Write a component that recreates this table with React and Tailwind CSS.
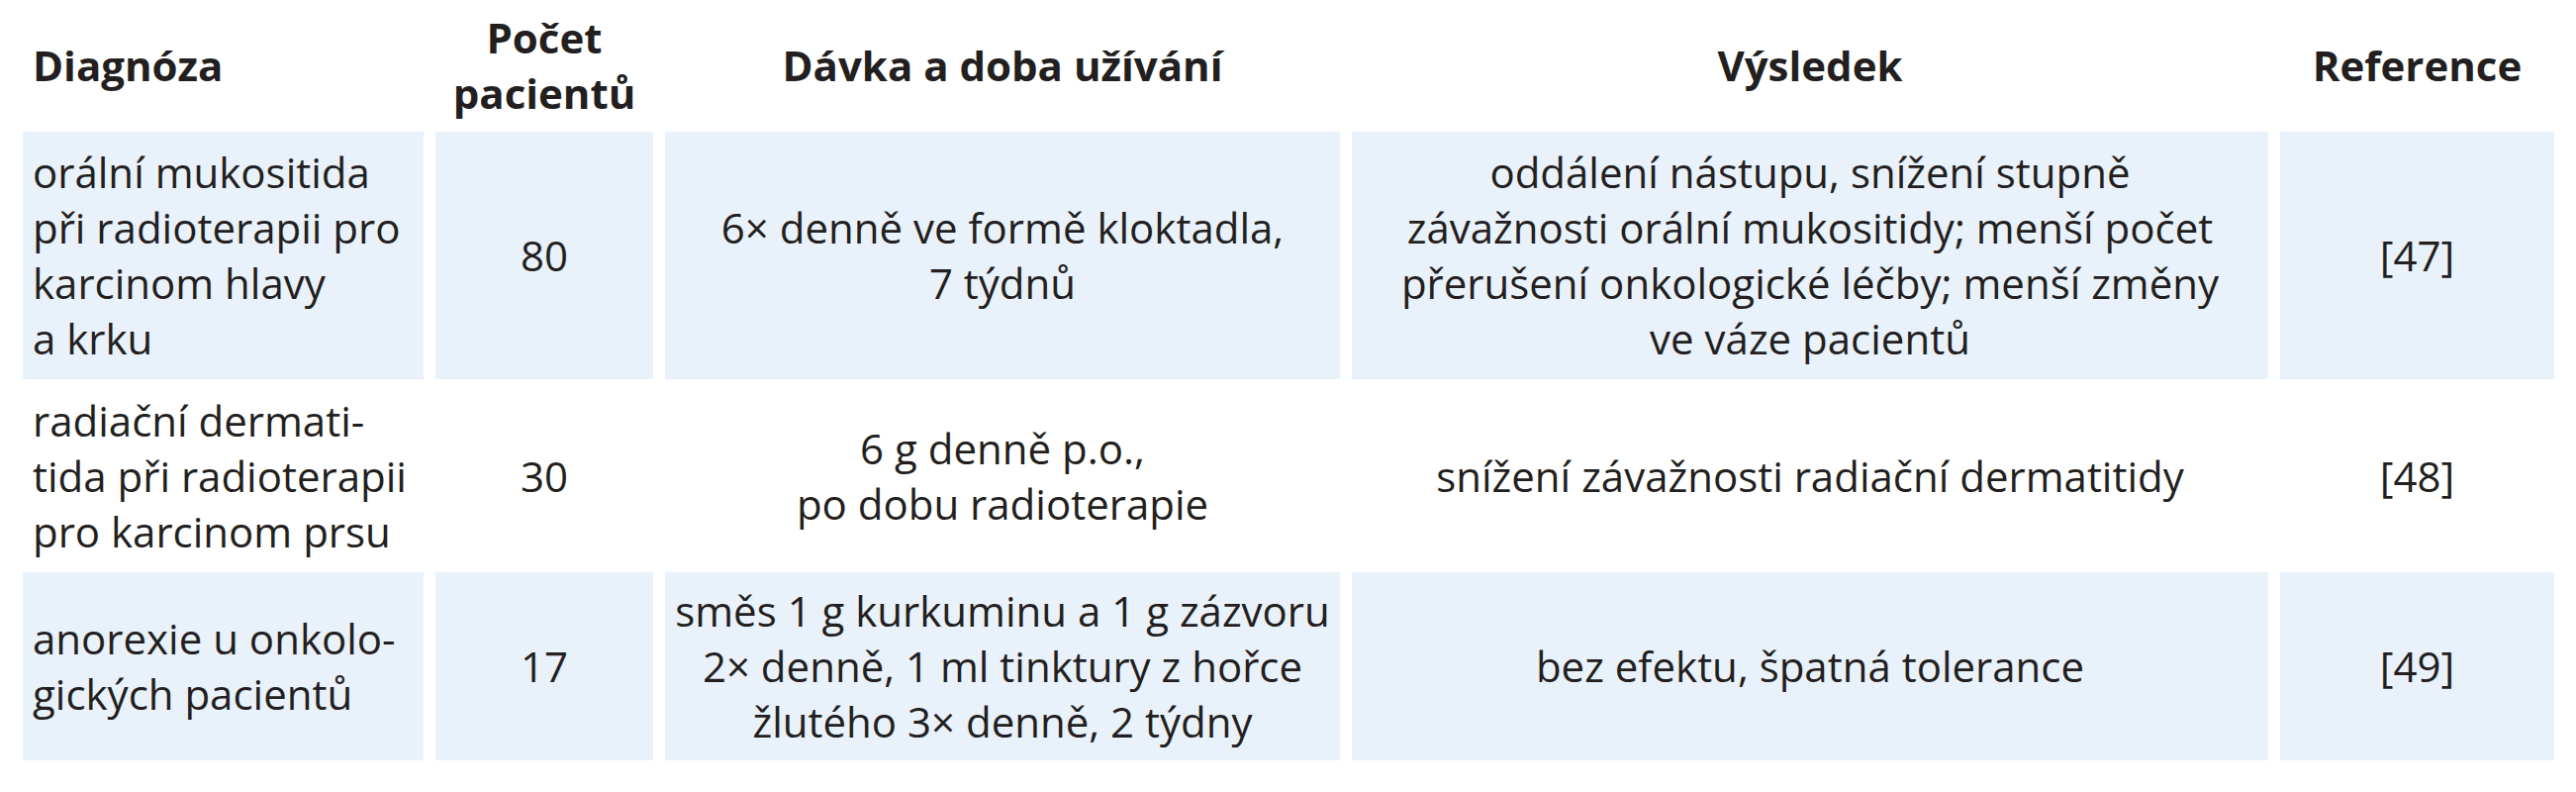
import React from "react";

const font = { fontFamily: '"Open Sans", "Noto Sans", sans-serif' };

function Cell({ children, shaded, left, className = "" }) {
  return (
    <div
      className={
        "flex items-center " +
        (left ? "justify-start text-left px-[10px] " : "justify-center text-center px-[4px] ") +
        (shaded ? "bg-[#e9f1fa] " : "bg-white ") +
        className
      }
    >
      <div className="whitespace-nowrap">{children}</div>
    </div>
  );
}

const L = ({ lines }) =>
  lines.map((l, i) => (
    <React.Fragment key={i}>
      {l}
      {i < lines.length - 1 && <br />}
    </React.Fragment>
  ));

const rowClass =
  "grid grid-cols-[405px_220px_682px_926px_277px] gap-x-[12px]";

export default function App() {
  return (
    <div
      className="w-[2603px] h-[800px] bg-white text-[#231f20] text-[42px] leading-[56px]"
      style={font}
    >
      <div className="pl-[23px] flex flex-col gap-y-[2px] w-[2581px]">
        <div className={rowClass + " h-[131px] font-bold"}>
          <Cell left>Diagnóza</Cell>
          <Cell>
            <L lines={["Počet", "pacientů"]} />
          </Cell>
          <Cell>Dávka a doba užívání</Cell>
          <Cell>Výsledek</Cell>
          <Cell>Reference</Cell>
        </div>

        <div className={rowClass + " h-[250px]"}>
          <Cell shaded left>
            <L
              lines={[
                "orální mukositida",
                "při radioterapii pro",
                "karcinom hlavy",
                "a krku",
              ]}
            />
          </Cell>
          <Cell shaded>80</Cell>
          <Cell shaded>
            <L lines={["6× denně ve formě kloktadla,", "7 týdnů"]} />
          </Cell>
          <Cell shaded>
            <L
              lines={[
                "oddálení nástupu, snížení stupně",
                "závažnosti orální mukositidy; menší počet",
                "přerušení onkologické léčby; menší změny",
                "ve váze pacientů",
              ]}
            />
          </Cell>
          <Cell shaded>[47]</Cell>
        </div>

        <div className={rowClass + " h-[191px]"}>
          <Cell left>
            <L
              lines={[
                "radiační dermati-",
                "tida při radioterapii",
                "pro karcinom prsu",
              ]}
            />
          </Cell>
          <Cell>30</Cell>
          <Cell>
            <L lines={["6 g denně p.o.,", "po dobu radioterapie"]} />
          </Cell>
          <Cell>snížení závažnosti radiační dermatitidy</Cell>
          <Cell>[48]</Cell>
        </div>

        <div className={rowClass + " h-[190px]"}>
          <Cell shaded left>
            <L lines={["anorexie u onkolo-", "gických pacientů"]} />
          </Cell>
          <Cell shaded>17</Cell>
          <Cell shaded>
            <L
              lines={[
                "směs 1 g kurkuminu a 1 g zázvoru",
                "2× denně, 1 ml tinktury z hořce",
                "žlutého 3× denně, 2 týdny",
              ]}
            />
          </Cell>
          <Cell shaded>bez efektu, špatná tolerance</Cell>
          <Cell shaded>[49]</Cell>
        </div>
      </div>
    </div>
  );
}
